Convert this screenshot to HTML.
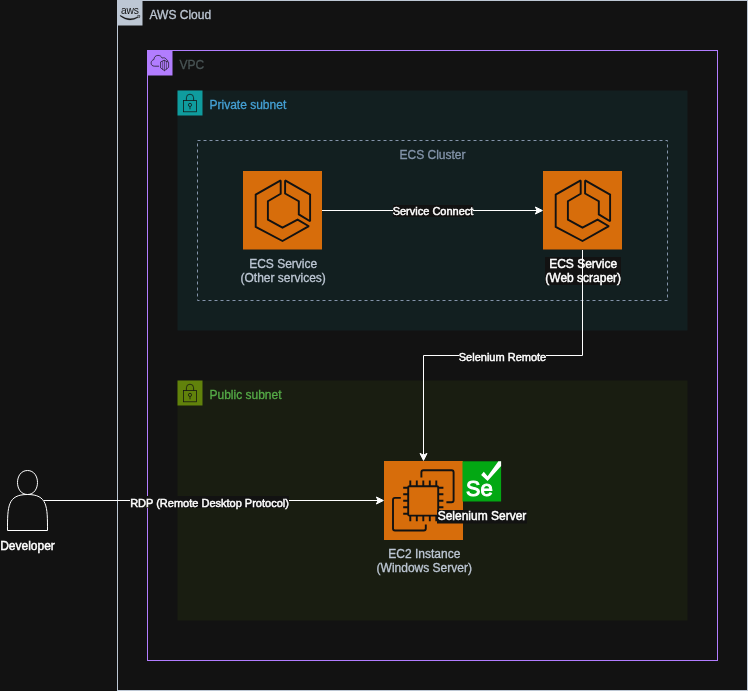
<!DOCTYPE html>
<html>
<head>
<meta charset="utf-8">
<title>AWS Architecture</title>
<style>
html,body{margin:0;padding:0;background:#121212;}
body{width:748px;height:691px;overflow:hidden;position:relative;font-family:"Liberation Sans",Arial,Helvetica,sans-serif;}
svg{position:absolute;left:0;top:0;display:block;will-change:transform;}
text{font-family:"Liberation Sans",Arial,Helvetica,sans-serif;}
.t12{font-size:12px;}
.t11{font-size:11px;}
.w{fill:#ffffff;stroke:#ffffff;stroke-width:0.45px;}
</style>
</head>
<body>
<svg width="748" height="691" viewBox="0 0 748 691">
<rect x="0" y="0" width="748" height="691" fill="#121212"/>

<!-- AWS Cloud group -->
<rect x="117.5" y="0.5" width="630" height="690" fill="none" stroke="#bdc7d4"/>
<rect x="117" y="0" width="25.5" height="25.5" fill="#bdc7d4"/>
<g id="awslogo">
<text transform="translate(120.9 13.7) scale(1 1.12)" x="0" y="0" font-size="10.3" textLength="18" lengthAdjust="spacing" fill="#121212" style="font-family:'Liberation Sans',sans-serif">aws</text>
<path d="M120.3 15.3 Q129.3 21.6 138.2 16.5 L138.5 17.3 Q129.3 23.2 120.1 15.9 Z" fill="#121212" stroke="#121212" stroke-width="0.3"/>
<path d="M137.3 15.7 Q138.8 15.2 139.7 15.5 Q139.9 16.6 139 18.1" fill="none" stroke="#121212" stroke-width="0.7"/>
</g>
<text x="149.5" y="18.8" class="t12" fill="#bdc7d4" stroke="#bdc7d4" stroke-width="0.3">AWS Cloud</text>

<!-- VPC -->
<rect x="147.5" y="50.5" width="570" height="610" fill="none" stroke="#b27dff"/>
<rect x="147" y="50" width="25.5" height="25.5" fill="#b27dff"/>
<g id="vpcicon" fill="none" stroke="#121212" stroke-width="0.7" stroke-linejoin="round" stroke-linecap="round">
<path transform="translate(0 0.5)" d="M158.7 65.7 H154.6 C152.3 65.7 150.9 64.3 151.1 62.4 C151.2 60.6 152.4 59.4 154 59 C153.9 56.6 155.6 55 157.9 54.9 C159.8 54.8 161.3 55.8 162.2 57.6 C163.9 56.9 165.6 57.4 166.3 58.9 C167.2 59.2 167.8 59.8 167.9 60.9"/>
<path d="M164.5 60.4 L168.6 62.3 V67.4 L164.5 70.7 L160.6 67.9 V62.3 Z"/>
<path d="M162.7 61.6 V69.2 M166.4 61.5 V69 M164.5 60.6 V70.5" stroke-width="0.5"/>
</g>
<text x="179.5" y="68.8" class="t12" fill="#495455" stroke="#495455" stroke-width="0.3">VPC</text>

<!-- Private subnet -->
<rect x="177.5" y="90.5" width="510" height="240" fill="#121f20"/>
<rect x="177.5" y="90.5" width="25" height="25" fill="#0f9c9e"/>
<g id="lock1" transform="translate(0,0)" fill="none" stroke="#121212" stroke-width="0.75">
<rect x="183.4" y="100.6" width="13.2" height="11.2"/>
<path d="M186.4 100.6 V97.8 A3.6 3.6 0 0 1 193.6 97.8 V100.6"/>
<circle cx="190" cy="104.9" r="1.6"/>
<path d="M190 106.5 V109.3"/>
</g>
<text x="209.5" y="108.8" class="t12" fill="#45a0d4" stroke="#45a0d4" stroke-width="0.3">Private subnet</text>

<!-- Public subnet -->
<rect x="177.5" y="380.5" width="510" height="240" fill="#191d11"/>
<rect x="177.5" y="380.5" width="25" height="25" fill="#61820b"/>
<g id="lock2" transform="translate(0,290)" fill="none" stroke="#121212" stroke-width="0.75">
<rect x="183.4" y="100.6" width="13.2" height="11.2"/>
<path d="M186.4 100.6 V97.8 A3.6 3.6 0 0 1 193.6 97.8 V100.6"/>
<circle cx="190" cy="104.9" r="1.6"/>
<path d="M190 106.5 V109.3"/>
</g>
<text x="209.5" y="398.8" class="t12" fill="#55ab47" stroke="#55ab47" stroke-width="0.3">Public subnet</text>

<!-- ECS cluster -->
<rect x="197.5" y="140.5" width="470" height="160" fill="none" stroke="#8494aa" stroke-dasharray="3 3"/>
<text x="432.5" y="158.8" text-anchor="middle" class="t12" fill="#8494aa" stroke="#8494aa" stroke-width="0.3">ECS Cluster</text>

<!-- ECS icons -->
<rect x="243" y="171" width="79" height="78.5" fill="#d76d0b"/>
<rect x="543" y="171" width="79" height="78.5" fill="#d76d0b"/>

<g id="ecs1" transform="translate(0,0)" fill="none" stroke="#121212" stroke-width="1.9" stroke-linejoin="miter" stroke-miterlimit="1.9">
<path d="M280.7 180.4 L255.7 194.6 V226.9 L282.5 241 L308.9 226.2 L297.6 219.6 L282.5 227.7 L267.9 219.6 V201.2 L280.7 193.8 Z"/>
<path d="M285.1 180.4 L310.1 194.6 V221.2 L298.8 214.4 V201.2 L285.1 193.5 Z"/>
</g>
<g id="ecs2" transform="translate(300,0)" fill="none" stroke="#121212" stroke-width="1.9" stroke-linejoin="miter" stroke-miterlimit="1.9">
<path d="M280.7 180.4 L255.7 194.6 V226.9 L282.5 241 L308.9 226.2 L297.6 219.6 L282.5 227.7 L267.9 219.6 V201.2 L280.7 193.8 Z"/>
<path d="M285.1 180.4 L310.1 194.6 V221.2 L298.8 214.4 V201.2 L285.1 193.5 Z"/>
</g>
<text x="283.2" y="268.1" text-anchor="middle" class="t12" fill="#bdc7d4" stroke="#bdc7d4" stroke-width="0.3">ECS Service</text>
<text x="283.2" y="282.1" text-anchor="middle" class="t12" fill="#bdc7d4" stroke="#bdc7d4" stroke-width="0.3">(Other services)</text>

<rect x="545" y="257" width="76" height="28" fill="#121212"/>
<text x="583.2" y="267.9" text-anchor="middle" class="t12 w">ECS Service</text>
<text x="583.2" y="281.9" text-anchor="middle" class="t12 w">(Web scraper)</text>

<!-- edges -->
<g stroke="#ffffff" fill="none">
<path d="M322 210.5 H537"/>
<path d="M582.5 250 V355.5 H423.5 V455"/>
<path d="M44 500.5 H378"/>
</g>
<g fill="#ffffff" stroke="#ffffff" stroke-miterlimit="10">
<path d="M542.38 210.5 L535.38 214 L537.13 210.5 L535.38 207 Z"/>
<path d="M423.5 460.38 L420 453.38 L423.5 455.13 L427 453.38 Z"/>
<path d="M383.38 500.5 L376.38 504 L378.13 500.5 L376.38 497 Z"/>
</g>

<rect x="393" y="205" width="80" height="12" fill="#121212"/>
<text x="433" y="215" text-anchor="middle" class="t11 w">Service Connect</text>
<rect x="459" y="351" width="87" height="12" fill="#121212"/>
<text x="502.5" y="361" text-anchor="middle" class="t11 w">Selenium Remote</text>
<rect x="130" y="496" width="159" height="12" fill="#121212"/>
<text x="209.5" y="507" text-anchor="middle" class="t11 w">RDP (Remote Desktop Protocol)</text>

<!-- EC2 -->
<rect x="384" y="461" width="79" height="79" fill="#d76d0b"/>
<g id="ec2" fill="none" stroke="#121212" stroke-width="1.9" stroke-linecap="butt">
<path d="M421.4 477.6 V472.2 A2 2 0 0 1 423.4 470.2 H451.6 A2 2 0 0 1 453.6 472.2 V500.2 A2 2 0 0 1 451.6 502.2 H446.4"/>
<path d="M400.8 497.9 H395 A2 2 0 0 0 393 499.9 V528.5 A2 2 0 0 0 395 530.5 H423.8 A2 2 0 0 0 425.8 528.5 V524.4"/>
<rect x="408.2" y="486.2" width="30" height="29.4" rx="1.2"/>
<path d="M410.3 480.6 V486.2 M410.3 515.6 V521.2 M403.2 487.7 H408.2 M438.2 487.7 H443.4 M416.8 480.6 V486.2 M416.8 515.6 V521.2 M403.2 494.2 H408.2 M438.2 494.2 H443.4 M423.3 480.6 V486.2 M423.3 515.6 V521.2 M403.2 500.7 H408.2 M438.2 500.7 H443.4 M429.8 480.6 V486.2 M429.8 515.6 V521.2 M403.2 507.2 H408.2 M438.2 507.2 H443.4 M436.3 480.6 V486.2 M436.3 515.6 V521.2 M403.2 513.7 H408.2 M438.2 513.7 H443.4 "/>
</g>
<text x="424.3" y="558.2" text-anchor="middle" class="t12" fill="#bdc7d4" stroke="#bdc7d4" stroke-width="0.3">EC2 Instance</text>
<text x="424.3" y="572.2" text-anchor="middle" class="t12" fill="#bdc7d4" stroke="#bdc7d4" stroke-width="0.3">(Windows Server)</text>

<!-- Selenium -->
<rect x="462.5" y="461.3" width="38.6" height="40.2" fill="#03a813"/>
<g id="selenium">
<path d="M481.1 475.1 L483.8 471.8 L487.6 476.2 L498.4 461.3 H501.1 V465.9 L487.6 481.1 Z" fill="#ffffff"/>
<text y="496.3" fill="#ffffff" stroke="#ffffff" stroke-width="1" style="font-family:'Liberation Sans',sans-serif"><tspan x="465.9" font-size="21.5">S</tspan><tspan x="480.6" font-size="22.2">e</tspan></text>
</g>
<rect x="437" y="510" width="90" height="13.5" fill="#121212"/>
<text x="482" y="520.3" text-anchor="middle" class="t12 w">Selenium Server</text>

<!-- Developer -->
<path id="actor" d="M7.50 530.50 C7.50 506.50 7.50 494.50 27.50 494.50 C14.17 494.50 14.17 470.50 27.50 470.50 C40.83 470.50 40.83 494.50 27.50 494.50 C47.50 494.50 47.50 506.50 47.50 530.50 Z" fill="none" stroke="#ffffff"/>
<text x="27.5" y="549.8" text-anchor="middle" class="t12 w">Developer</text>
</svg>
</body>
</html>
